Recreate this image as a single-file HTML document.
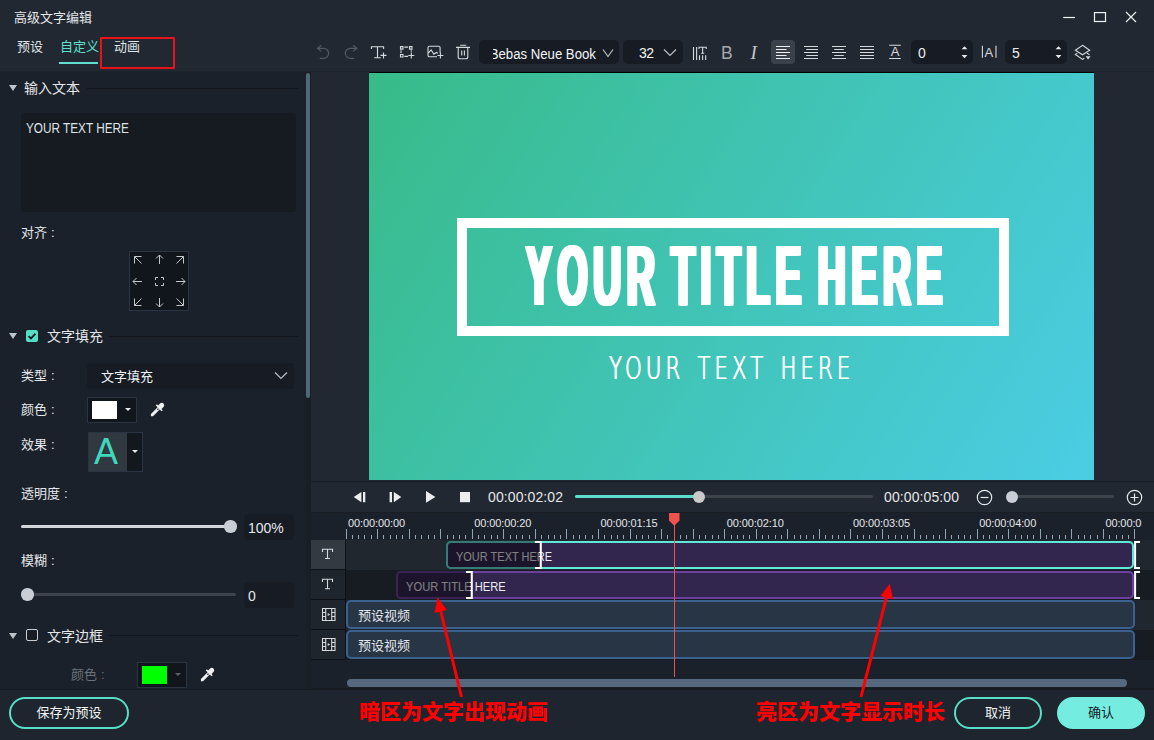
<!DOCTYPE html>
<html lang="zh-CN">
<head>
<meta charset="utf-8">
<title>高级文字编辑</title>
<style>
*{box-sizing:border-box;margin:0;padding:0}
html,body{width:1154px;height:740px;overflow:hidden;background:#222831}
body{font-family:"Liberation Sans","Noto Sans CJK SC",sans-serif;font-size:13px;color:#e3e6ea;position:relative;-webkit-font-smoothing:antialiased}
#app div,#app svg{position:absolute}
#app{position:absolute;left:0;top:0;width:1154px;height:740px;overflow:hidden;background:#222831}
.t{white-space:nowrap;line-height:16px;height:16px}
.t13{font-size:13px}
.t14{font-size:14px}
svg{overflow:visible}
/* left panel */
#left{left:0;top:71px;width:311px;height:618px;background:#1b212a;overflow:hidden}
.c{margin-left:4px;margin-right:-4px}
.secline{height:1px;background:#12161c}
.tri{width:0;height:0;border-left:4px solid transparent;border-right:4px solid transparent;border-top:6px solid #bfc4ca}
.inp{background:#171c24;border-radius:4px}
.cbox{background:#11161c;border:1px solid #2a3541}
.knob{width:12.500px;height:12.500px;border-radius:50%;background:#c9ced6}
/* toolbar */
.dd{background:#171c24;border-radius:5px}
.ic{stroke:#d5d9de;fill:none;stroke-width:1.2}
.dim{stroke:#4b535d}
/* timeline */
#tl{left:311px;top:512px;width:843px;height:177px;background:#1b212a;overflow:hidden}
.thead{left:0;width:34px;height:29px;background:#1f252d}
.clip{border-radius:5px}
.rl{letter-spacing:-.1px;font-size:11px;line-height:14px;height:14px;color:#e3e6ea}
.red{font-size:21px;line-height:28px;height:28px;font-weight:900;color:#ff0000}
.ctext{font-size:13px;line-height:16px;white-space:nowrap}
</style>
</head>
<body>
<div id="app">

<!-- ===== title bar ===== -->
<div class="t t13" style="left:14px;top:10px">高级文字编辑</div>
<svg style="left:1060px;top:8px" width="84" height="20" viewBox="0 0 84 20">
  <path d="M3.200 9.500h11.800" stroke="#f0f2f4" stroke-width="1.2" fill="none"/>
  <rect x="34.500" y="4.600" width="11" height="8.900" stroke="#f0f2f4" stroke-width="1.2" fill="none"/>
  <path d="M66 4l10 10M76 4l-10 10" stroke="#f0f2f4" stroke-width="1.2" fill="none"/>
</svg>

<!-- tabs -->
<div class="t t13" style="left:17px;top:39px;color:#dfe3e8">预设</div>
<div class="t t13" style="left:60px;top:39px;color:#5fe0cf">自定义</div>
<div style="left:59px;top:62px;width:39px;height:2px;background:#5fe0cf"></div>
<div class="t t13" style="left:114px;top:39px;color:#dfe3e8">动画</div>
<div style="left:100px;top:37px;width:75px;height:32px;border:2px solid #e8121a"></div>


<div id="left">
  <!-- section 1 -->
  <div class="tri" style="left:9px;top:14px"></div>
  <div class="t t14" style="left:24px;top:9px">输入文本</div>
  <div class="secline" style="left:87px;top:17px;width:211px"></div>
  <div style="left:21px;top:42px;width:275px;height:99px;background:#161b22;border-radius:4px"></div>
  <div class="t t14" id="ta" style="left:26px;top:49px;color:#dfe2e6;transform:scaleX(.84);transform-origin:left center">YOUR TEXT HERE</div>
  <div class="t t13" style="left:21px;top:154px">对齐<span class="c">:</span></div>
  <div class="cbox" style="left:129px;top:180px;width:60px;height:60px"></div>
  <svg style="left:129px;top:180px" width="60" height="60" viewBox="0 0 60 60" fill="none" stroke="#c3c8cf" stroke-width="1">
    <path d="M5.5 12.5v-7h7M5.5 5.5l7 7"/>
    <path d="M30.5 13v-9M27 7.5l3.500 -3.500l3.500 3.500"/>
    <path d="M47.500 5.500h7v7M54.500 5.500l-7 7"/>
    <path d="M4 30.500h9M7.500 27l-3.500 3.500l3.500 3.500"/>
    <path d="M26.500 29v-2.500h2.500M32 26.500h2.500v2.500M34.500 32v2.500h-2.500M29 34.500h-2.500v-2.500"/>
    <path d="M47 30.500h9M52.500 27l3.500 3.500l-3.500 3.500"/>
    <path d="M5.500 47.500v7h7M5.500 54.500l7 -7"/>
    <path d="M30.500 47v9M27 52.500l3.500 3.500l3.500 -3.500"/>
    <path d="M47.500 54.500h7v-7M54.500 54.500l-7 -7"/>
  </svg>

  <!-- section 2 -->
  <div class="tri" style="left:9px;top:262px"></div>
  <div style="left:26px;top:259px;width:12px;height:12px;background:#55dfc5;border-radius:2px"></div>
  <svg style="left:26px;top:259px" width="12" height="12" viewBox="0 0 12 12"><path d="M2.600 6.200l2.300 2.300l4.500 -4.800" stroke="#10151a" stroke-width="1.800" fill="none"/></svg>
  <div class="t t14" style="left:47px;top:257px">文字填充</div>
  <div class="secline" style="left:109px;top:265px;width:189px"></div>

  <div class="t t13" style="left:21px;top:297px">类型<span class="c">:</span></div>
  <div class="inp" style="left:87px;top:292px;width:207px;height:26px"></div>
  <div class="t t13" style="left:101px;top:298px;color:#f2f4f6">文字填充</div>
  <svg style="left:274px;top:300px" width="14" height="9" viewBox="0 0 14 9"><path d="M1 1.500l6 6l6 -6" stroke="#b9bec5" stroke-width="1.200" fill="none"/></svg>

  <div class="t t13" style="left:21px;top:331px">颜色<span class="c">:</span></div>
  <div class="cbox" style="left:87px;top:326px;width:50px;height:26px"></div>
  <div style="left:92px;top:330px;width:25px;height:18px;background:#fff"></div>
  <div class="tri" style="left:125px;top:337px;border-left-width:3px;border-right-width:3px;border-top-width:3px;border-top-color:#e6e9ec"></div>
  <svg class="drop" style="left:146px;top:327px" width="24" height="22" viewBox="146 398 24 22"><g transform="translate(150.900 416.150) rotate(-45)"><path d="M0 0l1.500 -1.500h9.500v-2.600h1.600v1.700h2.800a2.400 2.400 0 0 1 0 4.800h-2.800v1.700h-1.600v-2.600h-9.500z" fill="#eef0f2"/><path d="M8.400 0l2.300 -.8v1.600z" fill="#1b212a"/></g></svg>

  <div class="t t13" style="left:21px;top:365.500px">效果<span class="c">:</span></div>
  <div style="left:88px;top:361px;width:55px;height:40px;background:#13171e;border:1px solid #2a3541"></div>
  <div style="left:89px;top:362px;width:38px;height:38px;background:#303840"></div>
  <div id="bigA" style="left:87px;top:362px;width:38px;height:38px;line-height:38px;text-align:center;font-size:36px;color:#3fd8bd">A</div>
  <div class="tri" style="left:132px;top:379px;border-left-width:3px;border-right-width:3px;border-top-width:3px;border-top-color:#e6e9ec"></div>

  <div class="t t13" style="left:21px;top:415px">透明度<span class="c">:</span></div>
  <div style="left:21px;top:454px;width:213px;height:3px;border-radius:2px;background:#d3d7dc"></div>
  <div class="knob" style="left:224px;top:449px"></div>
  <div class="inp" style="left:244px;top:443px;width:50px;height:26px"></div>
  <div class="t t14" style="left:248px;top:449px;color:#e3e6ea">100%</div>

  <div class="t t13" style="left:21px;top:482px">模糊<span class="c">:</span></div>
  <div style="left:21px;top:522px;width:215px;height:3px;border-radius:2px;background:#3d444c"></div>
  <div class="knob" style="left:21px;top:517px"></div>
  <div class="inp" style="left:244px;top:511px;width:50px;height:26px"></div>
  <div class="t t14" style="left:248px;top:517px;color:#e3e6ea">0</div>

  <!-- section 3 -->
  <div class="tri" style="left:9px;top:562px"></div>
  <div style="left:26px;top:558px;width:12px;height:12px;border:1px solid #c9ced5;border-radius:2px;background:#171c24"></div>
  <div class="t t14" style="left:47px;top:557px">文字边框</div>
  <div class="secline" style="left:109px;top:564px;width:189px"></div>

  <div class="t t13" style="left:71px;top:596px;color:#6a7179">颜色<span class="c">:</span></div>
  <div class="cbox" style="left:137px;top:591px;width:50px;height:26px"></div>
  <div style="left:142px;top:595px;width:25px;height:18px;background:#00ff00"></div>
  <div class="tri" style="left:175px;top:602px;border-left-width:3px;border-right-width:3px;border-top-width:3px;border-top-color:#5a626b"></div>
  <svg class="drop" style="left:196px;top:592px" width="24" height="22" viewBox="146 398 24 22"><g transform="translate(150.900 416.150) rotate(-45)"><path d="M0 0l1.500 -1.500h9.500v-2.600h1.600v1.700h2.800a2.400 2.400 0 0 1 0 4.800h-2.800v1.700h-1.600v-2.600h-9.500z" fill="#eef0f2"/><path d="M8.400 0l2.300 -.8v1.600z" fill="#1b212a"/></g></svg>

  <!-- scrollbar -->
  <div style="left:306px;top:0;width:5px;height:618px;background:#1a1f25"></div>
  <div style="left:306px;top:2px;width:4px;height:325px;border-radius:2px;background:#4e6875"></div>
</div>



<!-- toolbar icons -->
<svg style="left:312px;top:40px" width="170" height="24" viewBox="312 40 170 24" fill="none" stroke-linecap="butt">
  <g stroke="#515963" stroke-width="1.200">
    <path d="M321.400 45.200l-3.900 3.100l3.900 3.100M317.800 48.300h5.750a5.050 5.050 0 0 1 0 10.100h-3.800"/>
    <path d="M353 45.200l3.900 3.100l-3.900 3.100M356.600 48.300h-6.250a5.050 5.050 0 0 0 0 10.100h3.900"/>
  </g>
  <g stroke="#d5d9de" stroke-width="1.100">
    <path d="M371.400 49v-2.300h12.200v2.300M377.500 46.700v11M374.200 57.700h6.600M383.500 52.400v6M380.500 55.400h6"/>
    <path d="M400.500 46.600h2.500v2.500h-2.500zM409.500 46.600h2.500v2.500h-2.500zM400.500 54.500h2.500v2.500h-2.500zM404.300 47.100h3.800M404.300 56.400h3.800M401 50.300v3M411.300 50.300v1.500M411.300 52.600v6M408.300 55.500h6"/>
    <path d="M437 56.800h-7.500a1.500 1.500 0 0 1 -1.500 -1.500v-7.600a1.500 1.500 0 0 1 1.500 -1.500h9.100a1.500 1.500 0 0 1 1.500 1.500v4.800M428.500 52.800l2.600 -2.800l2.800 4.200l2.400 -1.700l1.700 .8M440.400 52.600v6M437.400 55.500h6"/>
    <path d="M460.200 45.300h6M456 47.400h14M458.200 47.400v9.800a1.500 1.500 0 0 0 1.500 1.500h6.600a1.500 1.500 0 0 0 1.500 -1.500v-9.800M461.700 50.400v5M464.400 50.400v5"/>
  </g>
</svg>

<!-- font dropdown -->
<div class="dd" style="left:479px;top:40px;width:140px;height:24px"></div>
<div style="left:493px;top:40px;width:105px;height:24px;overflow:hidden"><div class="t t14" id="fontname" style="right:2px;top:5.500px;color:#f2f4f6;transform:scaleX(.94);transform-origin:right center">Bebas Neue Book</div></div>
<svg style="left:602px;top:48px" width="12" height="10" viewBox="0 0 12 10"><path d="M1 1.500l5 7l5 -7" stroke="#b9bec5" stroke-width="1.200" fill="none"/></svg>
<!-- size dropdown -->
<div class="dd" style="left:623px;top:40px;width:60px;height:24px"></div>
<div class="t t14" style="left:639px;top:45px;color:#f2f4f6;letter-spacing:-.6px">32</div>
<svg style="left:663px;top:48px" width="14" height="9" viewBox="0 0 14 9"><path d="M1 1.500l6 6l6 -6" stroke="#b9bec5" stroke-width="1.200" fill="none"/></svg>

<div class="dd" style="left:911px;top:40px;width:62px;height:24px"></div>
<div class="dd" style="left:1005px;top:40px;width:62px;height:24px"></div>
<svg style="left:690px;top:40px" width="410" height="24" viewBox="690 40 410 24" fill="none">
  <g stroke="#d5d9de" stroke-width="1.100">
    <!-- text spacing -->
    <path d="M693.500 46.900v13.200M696.600 46.900v13.200M699 49v-1.700h7.200v1.700M702.600 47.300v6M701 53.300h3.200M699.500 55.300v4.800M702.600 55.300v4.800M705.700 55.300v4.800"/>
  </g>
  <!-- align left active -->
  <rect x="771" y="40" width="24" height="24" rx="4" fill="#3a414a"/>
  <g stroke="#eceef0" stroke-width="1">
    <path d="M776 46.500h14M776 49.500h10.500M776 52.500h14M776 55.500h10.500M776 58.500h14"/>
  </g>
  <g stroke="#d5d9de" stroke-width="1.100">
    <path d="M804 46.500h14M806.200 49.500h11.800M804 52.500h14M806.200 55.500h11.800M804 58.500h14"/>
    <path d="M832 46.500h14M834.200 49.500h9.600M832 52.500h14M834.200 55.500h9.600M832 58.500h14"/>
    <path d="M860 46.500h14M860 49.500h14M860 52.500h14M860 55.500h14M860 58.500h14"/>
    <!-- line spacing -->
    <path d="M889.200 45.300h11.600M889.200 58.500h11.600"/>
    <!-- char spacing -->
    <path d="M982.400 45.700v12M996 45.700v12"/>
    <!-- layers -->
    <path d="M1082.500 45.300l7.200 5l-7.200 4.500l-7.100 -4.500zM1077.300 53.100l-1.900 1.300l7.100 5l1.800 -1.100M1086.900 53.100l2.600 1.700"/>
  </g>
  <path d="M1085.600 56.300h5l-2.500 3.300z" fill="#d5d9de"/>
  <!-- spinners -->
  <g fill="#e6e9ec">
    <path d="M961.600 49.300l2.900 -3.100l2.900 3.100zM961.600 55.100l2.900 3.100l2.900 -3.100z"/>
    <path d="M1055.600 49.300l2.900 -3.100l2.900 3.100zM1055.600 55.100l2.900 3.100l2.900 -3.100z"/>
  </g>
</svg>
<div class="t" style="left:721px;top:42.500px;font-size:17.500px;line-height:20px;height:20px;color:#a3a8af">B</div>
<div class="t" style="left:750.500px;top:43px;font-size:19px;line-height:20px;height:20px;color:#c3c7cc;font-family:'Liberation Serif',serif;font-style:italic">I</div>
<div class="t" style="left:890.700px;top:43.700px;font-size:13px;color:#d5d9de">A</div>
<div class="t" style="left:984.500px;top:44.500px;font-size:13px;color:#d5d9de">A</div>
<div class="t t14" style="left:918px;top:44.500px;color:#e9ecef">0</div>
<div class="t t14" style="left:1012px;top:44.500px;color:#e9ecef">5</div>



<div style="left:0;top:71px;width:1154px;height:1px;background:#1d232b"></div>
<div style="left:369px;top:72px;width:725px;height:1px;background:#000"></div>
<div id="canvas" style="left:369px;top:73px;width:725px;height:407px;overflow:hidden;background:linear-gradient(122deg,rgb(55,187,136),rgb(75,205,229))">
  <div style="left:88px;top:145px;width:552px;height:118px;border:10px solid #fff"></div>
  <div id="ttl" style="left:156.500px;top:159px;white-space:nowrap;font-weight:bold;font-size:86px;line-height:86px;color:#fff;transform:scaleX(.45);transform-origin:left top;letter-spacing:12.600px;word-spacing:-12.600px;text-shadow:2.250px 0 0 #fff,-2.250px 0 0 #fff,4.500px 0 0 #fff,-4.500px 0 0 #fff">YOUR TITLE HERE</div>
  <div id="sub" style="left:240px;top:275px;white-space:nowrap;font-family:'DejaVu Sans Light','DejaVu Sans','Liberation Sans',sans-serif;font-weight:200;font-size:32.500px;line-height:40px;color:#fff;transform:scaleX(.66);transform-origin:left top;letter-spacing:6px;word-spacing:3.500px;text-shadow:.6px 0 0 #fff,-.6px 0 0 #fff">YOUR TEXT HERE</div>
</div>
<div style="left:311px;top:481px;width:843px;height:1px;background:#171c23"></div>



<svg style="left:345px;top:484px" width="140" height="28" viewBox="345 484 140 28" fill="#ebedef">
  <path d="M353.700 497l7.700 -5.100v10.300zM363 491.900h2.300v10.300h-2.300z"/>
  <path d="M389.600 491.900h2.400v10.300h-2.400zM393.800 491.900l7.500 5.100l-7.500 5.200z"/>
  <path d="M426 491l9.400 5.900l-9.400 5.900z"/>
  <path d="M460 492h10v10.200h-10z"/>
</svg>
<div class="t t14" style="left:488px;top:489px;color:#e3e6ea;letter-spacing:.1px">00:00:02:02</div>
<div style="left:575px;top:495px;width:298px;height:3px;border-radius:2px;background:#3d444c"></div>
<div style="left:575px;top:495px;width:124px;height:3px;border-radius:2px;background:#5fdccb"></div>
<div class="knob" style="left:692.500px;top:490.500px;background:#c8c9cb"></div>
<div class="t t14" style="left:884px;top:489px;color:#e3e6ea;letter-spacing:.1px">00:00:05:00</div>
<svg style="left:976px;top:489px" width="168" height="17" viewBox="976 489 168 17" fill="none" stroke="#e6e9ec" stroke-width="1.200">
  <circle cx="984.500" cy="497.500" r="7.200"/><path d="M980.500 497.500h8"/>
  <circle cx="1134.500" cy="497.500" r="7.200"/><path d="M1130.500 497.500h8M1134.500 493.500v8"/>
</svg>
<div style="left:1012px;top:495px;width:102px;height:3px;border-radius:2px;background:#3d444c"></div>
<div class="knob" style="left:1005.500px;top:490.500px"></div>



<div id="tl">
  <div style="left:0;top:0;width:843px;height:1px;background:#191e25"></div>
  <!-- ruler -->
  <div style="left:0;top:0;width:831px;height:28px;overflow:hidden"><div class="t rl" style="top:3.500px;left:37.00px">00:00:00:00</div><div class="t rl" style="top:3.500px;left:163.23px">00:00:00:20</div><div class="t rl" style="top:3.500px;left:289.46px">00:00:01:15</div><div class="t rl" style="top:3.500px;left:415.69px">00:00:02:10</div><div class="t rl" style="top:3.500px;left:541.92px">00:00:03:05</div><div class="t rl" style="top:3.500px;left:668.15px">00:00:04:00</div><div class="t rl" style="top:3.500px;left:794.38px">00:00:05:00</div></div>
  <svg style="left:0;top:0" width="843" height="28" viewBox="0 0 843 28"><path d="M35.500 17v10M66.500 17v10M98.500 17v10M129.500 17v10M161.500 17v10M192.500 17v10M224.500 17v10M255.500 17v10M287.500 17v10M319.500 17v10M350.500 17v10M382.500 17v10M413.500 17v10M445.500 17v10M476.500 17v10M508.500 17v10M539.500 17v10M571.500 17v10M603.500 17v10M634.500 17v10M666.500 17v10M697.500 17v10M729.500 17v10M760.500 17v10M792.500 17v10M823.500 17v10M41.500 23v4M47.500 23v4M53.500 23v4M60.500 23v4M72.500 23v4M79.500 23v4M85.500 23v4M91.500 23v4M104.500 23v4M110.500 23v4M117.500 23v4M123.500 23v4M136.500 23v4M142.500 23v4M148.500 23v4M154.500 23v4M167.500 23v4M173.500 23v4M180.500 23v4M186.500 23v4M199.500 23v4M205.500 23v4M211.500 23v4M218.500 23v4M230.500 23v4M237.500 23v4M243.500 23v4M249.500 23v4M262.500 23v4M268.500 23v4M274.500 23v4M281.500 23v4M293.500 23v4M300.500 23v4M306.500 23v4M312.500 23v4M325.500 23v4M331.500 23v4M337.500 23v4M344.500 23v4M356.500 23v4M363.500 23v4M369.500 23v4M375.500 23v4M388.500 23v4M394.500 23v4M401.500 23v4M407.500 23v4M420.500 23v4M426.500 23v4M432.500 23v4M438.500 23v4M451.500 23v4M457.500 23v4M464.500 23v4M470.500 23v4M483.500 23v4M489.500 23v4M495.500 23v4M502.500 23v4M514.500 23v4M521.500 23v4M527.500 23v4M533.500 23v4M546.500 23v4M552.500 23v4M558.500 23v4M565.500 23v4M577.500 23v4M584.500 23v4M590.500 23v4M596.500 23v4M609.500 23v4M615.500 23v4M622.500 23v4M628.500 23v4M640.500 23v4M647.500 23v4M653.500 23v4M659.500 23v4M672.500 23v4M678.500 23v4M685.500 23v4M691.500 23v4M704.500 23v4M710.500 23v4M716.500 23v4M722.500 23v4M735.500 23v4M741.500 23v4M748.500 23v4M754.500 23v4M767.500 23v4M773.500 23v4M779.500 23v4M786.500 23v4M798.500 23v4M805.500 23v4M811.500 23v4M817.500 23v4" stroke="#8fa6b8" stroke-width="1" fill="none"/></svg>

  <!-- lanes -->
  <div style="left:35px;top:28px;width:808px;height:30px;background:#20272f"></div>
  <div style="left:35px;top:58px;width:808px;height:30px;background:#171c23"></div>
  <div style="left:35px;top:88px;width:808px;height:30px;background:#20272f"></div>
  <div style="left:35px;top:118px;width:808px;height:30px;background:#171c23"></div>

  <!-- heads -->
  <div style="left:0;top:28px;width:35px;height:120px;background:#0e1216"></div>
  <div class="thead" style="top:28px;background:#333a42"></div>
  <div class="thead" style="top:58px"></div>
  <div class="thead" style="top:88px"></div>
  <div class="thead" style="top:118px"></div>
  <svg style="left:0;top:28px" width="35" height="120" viewBox="311 540 35 120" fill="none" stroke="#d5d9de" stroke-width="1.100">
    <path d="M322.500 552v-2.700h10v2.700M327.500 549.300v9.400M325 558.500h5"/>
    <path d="M322.500 582v-2.700h10v2.700M327.500 579.300v9.400M325 588.700h5"/>
    <path d="M322.500 608.500h12.500v12h-12.500zM325.700 608.500v12M331.700 608.500v12M322.500 612.500h3.200M322.500 616.500h3.200M331.700 612.500h3.300M331.700 616.500h3.300"/>
    <path d="M322.500 638.500h12.500v12h-12.500zM325.700 638.500v12M331.700 638.500v12M322.500 642.500h3.200M322.500 646.500h3.200M331.700 642.500h3.300M331.700 646.500h3.300"/>
    <path d="M327.700 613l2.500 1.500l-2.500 1.500zM327.700 643l2.500 1.500l-2.500 1.500z" fill="#d5d9de" stroke="none"/>
  </svg>

  <!-- clip 1 -->
  <div class="clip" style="left:135px;top:29px;width:688px;height:28px;background:#5fe8d8;overflow:hidden">
    <div style="left:2px;top:2px;right:2px;bottom:2px;border-radius:3px;background:#32264f"></div>
    <div class="ctext" id="c1t" style="left:10px;top:8px;color:#eceef1;transform:scaleX(.845);transform-origin:left center">YOUR TEXT HERE</div>
    <div style="left:0;top:0;width:93px;height:28px;background:rgba(0,0,0,.46)"></div>
  </div>
  <svg style="left:224px;top:29px" width="7" height="28" viewBox="0 0 7 28"><path d="M0 1h5.800v26h-5.800" stroke="#fff" stroke-width="2" fill="none"/></svg>
  <svg style="left:823px;top:29px" width="7" height="28" viewBox="0 0 7 28"><path d="M6 1h-4.900v26h4.900" stroke="#fff" stroke-width="2" fill="none"/></svg>
  <!-- clip 2 -->
  <div class="clip" style="left:85px;top:59px;width:738px;height:28px;background:#6d3f9f;overflow:hidden">
    <div style="left:2px;top:2px;right:2px;bottom:2px;border-radius:3px;background:#32264f"></div>
    <div class="ctext" id="c2t" style="left:10px;top:8px;color:#eceef1;transform:scaleX(.86);transform-origin:left center">YOUR TITLE HERE</div>
    <div style="left:0;top:0;width:74px;height:28px;background:rgba(0,0,0,.46)"></div>
  </div>
  <svg style="left:155px;top:59px" width="7" height="28" viewBox="0 0 7 28"><path d="M0 1h5.800v26h-5.800" stroke="#fff" stroke-width="2" fill="none"/></svg>
  <svg style="left:823px;top:59px" width="7" height="28" viewBox="0 0 7 28"><path d="M6 1h-4.900v26h4.900" stroke="#fff" stroke-width="2" fill="none"/></svg>
  <!-- clip 3,4 -->
  <div class="clip" style="left:35px;top:88px;width:789px;height:29px;background:#273545;border:2px solid #3a6190"></div>
  <div class="t t13" style="left:47px;top:95.500px;color:#e3e6ea">预设视频</div>
  <div class="clip" style="left:35px;top:118px;width:789px;height:29px;background:#273545;border:2px solid #3a6190"></div>
  <div class="t t13" style="left:47px;top:125.500px;color:#e3e6ea">预设视频</div>

  <!-- playhead -->
  <div style="left:363px;top:13px;width:1px;height:152px;background:#e8534f"></div>
  <svg style="left:357px;top:1px" width="13" height="13" viewBox="0 0 13 13"><path d="M1 0h10.500v7.500l-5.250 5.200l-5.250 -5.200z" fill="#f0524e"/></svg>

  <!-- scrollbar -->
  <div style="left:36px;top:167px;width:780px;height:8px;border-radius:4px;background:#56687e"></div>
  <div style="left:0;top:176px;width:843px;height:1px;background:#171c22"></div>
</div>



<div style="left:0;top:689px;width:1154px;height:51px;background:#1e252e"></div>
<div style="left:0;top:689px;width:1154px;height:1px;background:#171c22"></div>
<div class="btn" style="left:9px;top:697px;width:120px;height:32px;border:2px solid #56dfc6;border-radius:16px"></div>
<div class="t t13" style="left:9px;top:705px;width:120px;text-align:center;color:#f2f4f6">保存为预设</div>
<div class="btn" style="left:953.500px;top:697px;width:88px;height:32px;border:2px solid #56dfc6;border-radius:16px"></div>
<div class="t t13" style="left:954px;top:705px;width:88px;text-align:center;color:#f2f4f6">取消</div>
<div class="btn" style="left:1057px;top:697px;width:88px;height:32px;background:#74ede0;border-radius:16px"></div>
<div class="t t13" style="left:1057px;top:705px;width:88px;text-align:center;color:#1b212a">确认</div>



<div class="t red" style="left:359px;top:698px">暗区为文字出现动画</div>
<div class="t red" style="left:756px;top:698px">亮区为文字显示时长</div>
<svg style="left:0;top:0" width="1154" height="740" viewBox="0 0 1154 740">
  <g stroke="#ff0000" stroke-width="3" fill="#ff0000">
    <path d="M461.500 697l-20.800 -86" fill="none"/>
    <path d="M437.500 597.500l9.500 12.500l-12.500 3z" stroke="none"/>
    <path d="M861 697l25.500 -100" fill="none"/>
    <path d="M889.800 583.800l3.200 15.500l-12.500 -3.200z" stroke="none"/>
  </g>
</svg>


</div>
</body>
</html>
